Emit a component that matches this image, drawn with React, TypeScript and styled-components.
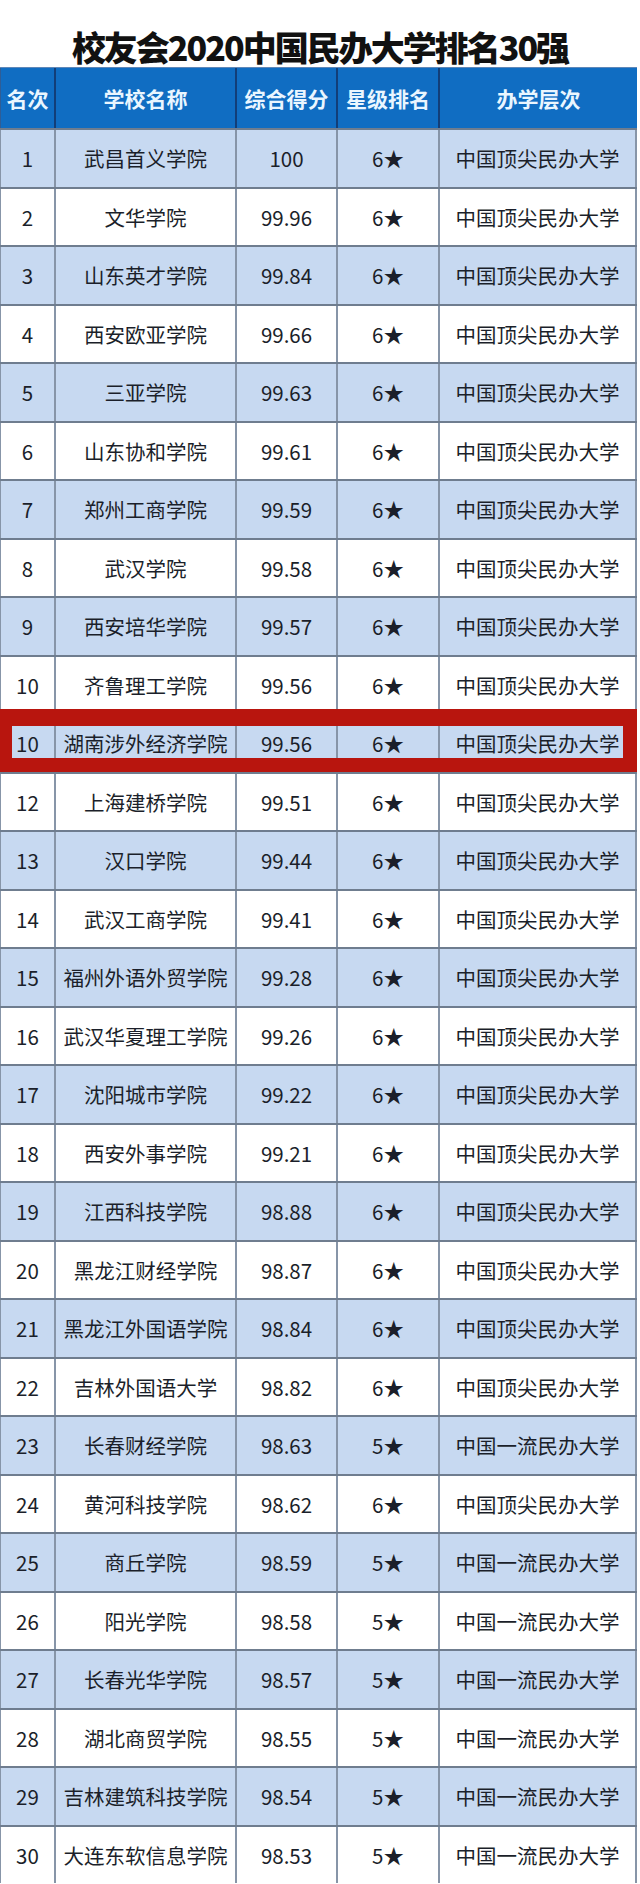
import styled, { createGlobalStyle } from "styled-components";

type Row = {
  rank: string;
  name: string;
  score: string;
  star: string;
  level: string;
  marked?: boolean;
};

const TOP = "中国顶尖民办大学";
const FIRST = "中国一流民办大学";

const rows: Row[] = [
  { rank: "1", name: "武昌首义学院", score: "100", star: "6★", level: TOP },
  { rank: "2", name: "文华学院", score: "99.96", star: "6★", level: TOP },
  { rank: "3", name: "山东英才学院", score: "99.84", star: "6★", level: TOP },
  { rank: "4", name: "西安欧亚学院", score: "99.66", star: "6★", level: TOP },
  { rank: "5", name: "三亚学院", score: "99.63", star: "6★", level: TOP },
  { rank: "6", name: "山东协和学院", score: "99.61", star: "6★", level: TOP },
  { rank: "7", name: "郑州工商学院", score: "99.59", star: "6★", level: TOP },
  { rank: "8", name: "武汉学院", score: "99.58", star: "6★", level: TOP },
  { rank: "9", name: "西安培华学院", score: "99.57", star: "6★", level: TOP },
  { rank: "10", name: "齐鲁理工学院", score: "99.56", star: "6★", level: TOP },
  { rank: "10", name: "湖南涉外经济学院", score: "99.56", star: "6★", level: TOP, marked: true },
  { rank: "12", name: "上海建桥学院", score: "99.51", star: "6★", level: TOP },
  { rank: "13", name: "汉口学院", score: "99.44", star: "6★", level: TOP },
  { rank: "14", name: "武汉工商学院", score: "99.41", star: "6★", level: TOP },
  { rank: "15", name: "福州外语外贸学院", score: "99.28", star: "6★", level: TOP },
  { rank: "16", name: "武汉华夏理工学院", score: "99.26", star: "6★", level: TOP },
  { rank: "17", name: "沈阳城市学院", score: "99.22", star: "6★", level: TOP },
  { rank: "18", name: "西安外事学院", score: "99.21", star: "6★", level: TOP },
  { rank: "19", name: "江西科技学院", score: "98.88", star: "6★", level: TOP },
  { rank: "20", name: "黑龙江财经学院", score: "98.87", star: "6★", level: TOP },
  { rank: "21", name: "黑龙江外国语学院", score: "98.84", star: "6★", level: TOP },
  { rank: "22", name: "吉林外国语大学", score: "98.82", star: "6★", level: TOP },
  { rank: "23", name: "长春财经学院", score: "98.63", star: "5★", level: FIRST },
  { rank: "24", name: "黄河科技学院", score: "98.62", star: "6★", level: TOP },
  { rank: "25", name: "商丘学院", score: "98.59", star: "5★", level: FIRST },
  { rank: "26", name: "阳光学院", score: "98.58", star: "5★", level: FIRST },
  { rank: "27", name: "长春光华学院", score: "98.57", star: "5★", level: FIRST },
  { rank: "28", name: "湖北商贸学院", score: "98.55", star: "5★", level: FIRST },
  { rank: "29", name: "吉林建筑科技学院", score: "98.54", star: "5★", level: FIRST },
  { rank: "30", name: "大连东软信息学院", score: "98.53", star: "5★", level: FIRST },
];

const headers = ["名次", "学校名称", "综合得分", "星级排名", "办学层次"];

const App = () => {
  return (
    <>
      <GlobalStyle />
      <Page>
        <Title>校友会2020中国民办大学排名30强</Title>
        <Table>
          <HeadRow>
            {headers.map((h) => (
              <HeadCell key={h}>{h}</HeadCell>
            ))}
          </HeadRow>
          {rows.map((r, i) => (
            <BodyRow key={r.name} $striped={i % 2 === 0}>
              <Cell>{r.rank}</Cell>
              <Cell>{r.name}</Cell>
              <Cell>{r.score}</Cell>
              <Cell>{r.star}</Cell>
              <Cell>{r.level}</Cell>
              {r.marked && <Marker />}
            </BodyRow>
          ))}
        </Table>
      </Page>
    </>
  );
};

export default App;

const GlobalStyle = createGlobalStyle`
  html, body {
    margin: 0;
    padding: 0;
    background: #ffffff;
  }
  body {
    font-family: "Noto Sans CJK SC", "Noto Sans", sans-serif;
  }
`;

const Page = styled.main`
  width: 640px;
  height: 1884px;
  overflow: hidden;
  background: #ffffff;
`;

const Title = styled.h1`
  margin: 0;
  height: 67px;
  display: flex;
  align-items: flex-end;
  justify-content: center;
  padding-bottom: 3px;
  box-sizing: border-box;
  font-size: 34px;
  font-weight: 900;
  letter-spacing: -2px;
  color: #111111;
  line-height: 1;
`;

const Table = styled.section`
  width: 637px;
  display: flex;
  flex-direction: column;
`;

const columns = "56px 181px 101px 102px 197px";

const HeadRow = styled.div`
  display: grid;
  grid-template-columns: ${columns};
  height: 61px;
  background: #106dc2;
  border-top: 1px solid #5e87b8;
  box-sizing: border-box;
`;

const HeadCell = styled.div`
  display: flex;
  align-items: center;
  justify-content: center;
  color: #eaf6ff;
  font-size: 21px;
  font-weight: 700;
  border-right: 2px solid #123e78;
  &:first-child {
    border-left: 1px solid #2f5d96;
  }
  &:last-child {
    border-right: none;
  }
`;

const BodyRow = styled.div<{ $striped: boolean }>`
  position: relative;
  display: grid;
  grid-template-columns: ${columns};
  height: 58.5px;
  box-sizing: border-box;
  border-top: 2px solid #6f7d8f;
  background: ${({ $striped }) => ($striped ? "#c7d9f1" : "#ffffff")};
`;

const Cell = styled.div`
  display: flex;
  align-items: center;
  justify-content: center;
  color: #1b1f2a;
  font-size: 20.5px;
  white-space: nowrap;
  border-right: 2px solid #8795a8;
  &:first-child {
    border-left: 1px solid #8795a8;
  }
`;

const Marker = styled.div`
  position: absolute;
  top: -6px;
  left: 0;
  right: 0;
  bottom: 0;
  border-style: solid;
  border-color: #b8150e;
  border-width: 17px 14px 14px 12px;
  pointer-events: none;
`;
